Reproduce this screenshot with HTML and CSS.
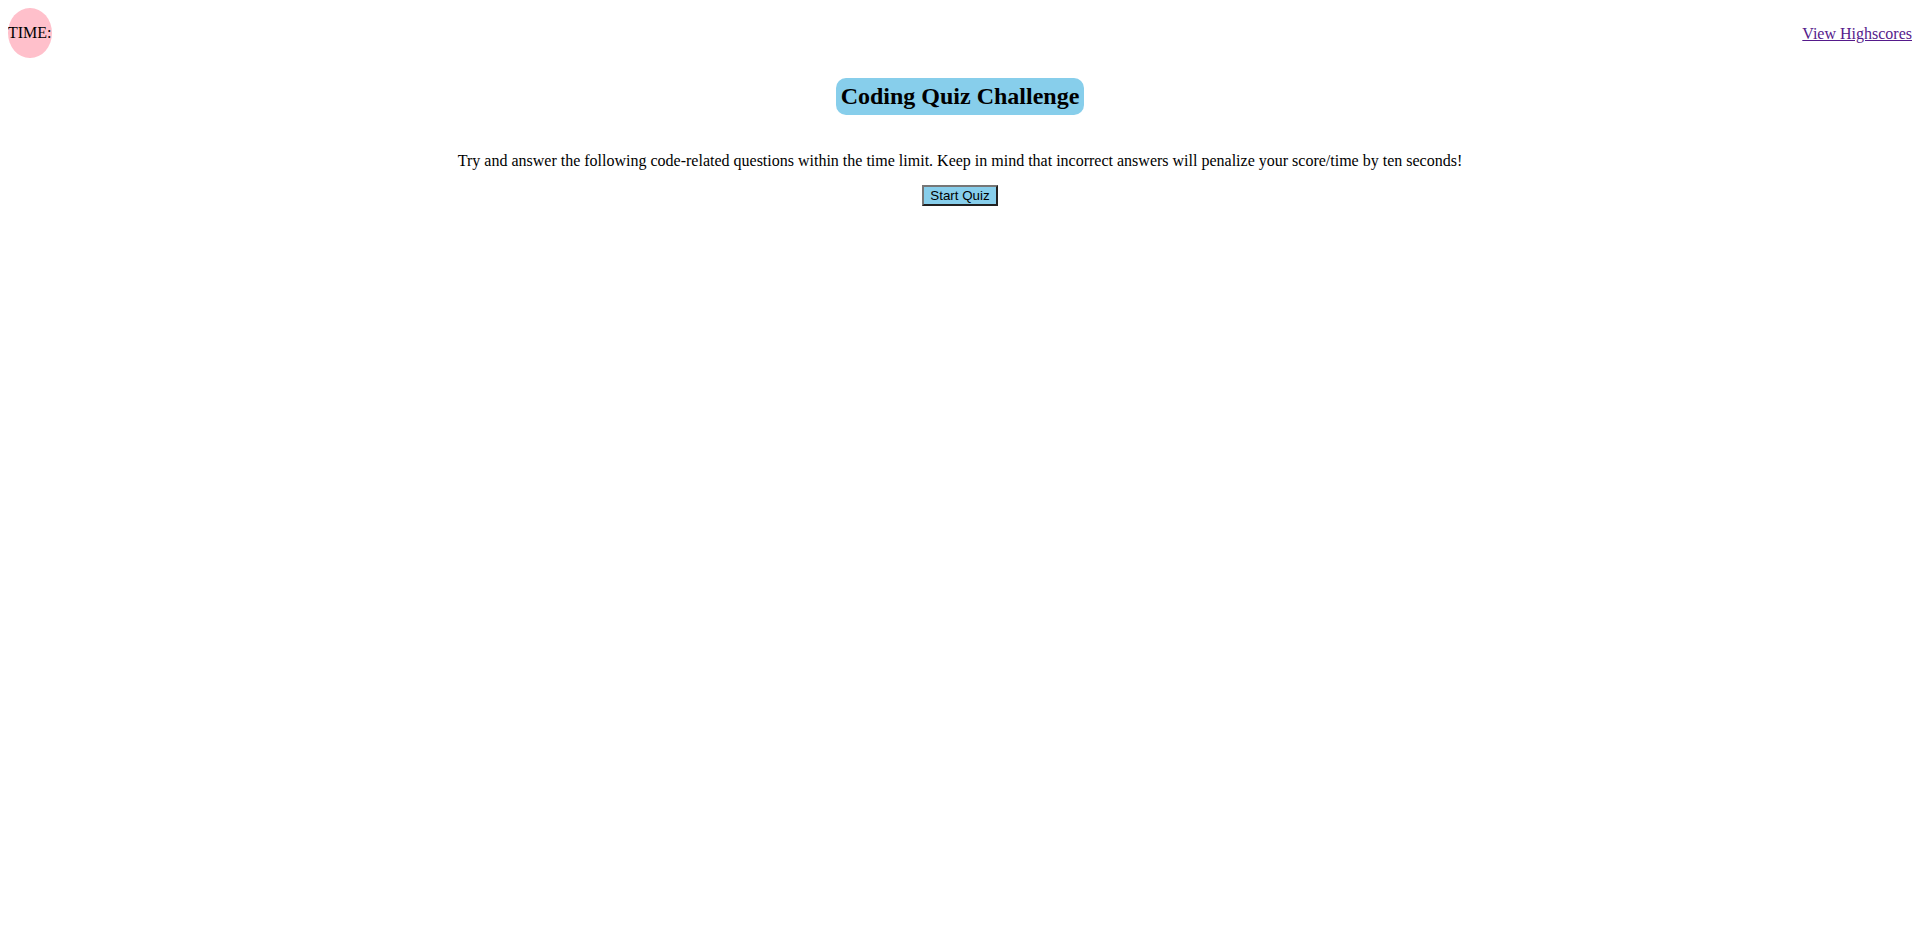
FILE: index.html
```html
<!DOCTYPE html>
<html>
<head>
<meta charset="utf-8">
<title>Coding Quiz</title>
<link rel="stylesheet" href="styles.css">
</head>
<body>
<header class="top">
  <div class="timer">TIME:</div>
  <a class="scores" href="#">View Highscores</a>
</header>
<main class="intro">
  <h2 class="title">Coding Quiz Challenge</h2>
  <p class="desc">Try and answer the following code-related questions within the time limit. Keep in mind that incorrect answers will penalize your score/time by ten seconds!</p>
  <div class="actions"><button class="start">Start Quiz</button></div>
</main>
</body>
</html>
```
FILE: styles.css
```css
html, body {
  background: #fff;
}
body {
  margin: 8px;
  font-family: "Liberation Serif", "Times New Roman", serif;
  font-size: 16px;
  color: #000;
}
.top {
  display: flex;
  justify-content: space-between;
  align-items: center;
}
.timer {
  background: pink;
  border-radius: 50%;
  padding: 16px 0;
  line-height: 18px;
}
.scores {
  color: #551a8b;
  line-height: 18px;
  margin-top: 1px;
}
.intro {
  text-align: center;
}
.title {
  display: block;
  width: fit-content;
  margin: 20px auto 0;
  padding: 4px 5px;
  background: skyblue;
  border-radius: 10px;
  font-size: 24px;
  line-height: 29px;
  font-weight: bold;
}
.desc {
  margin: 37px 0 0;
  line-height: 18px;
}
.actions {
  margin-top: 15px;
  line-height: 0;
}
.start {
  font-family: "Liberation Sans", Arial, sans-serif;
  font-size: 13.333px;
  background: skyblue;
  color: #000;
  border: 2px outset #767676;
  padding: 1px 6px;
  line-height: 15px;
}
```
